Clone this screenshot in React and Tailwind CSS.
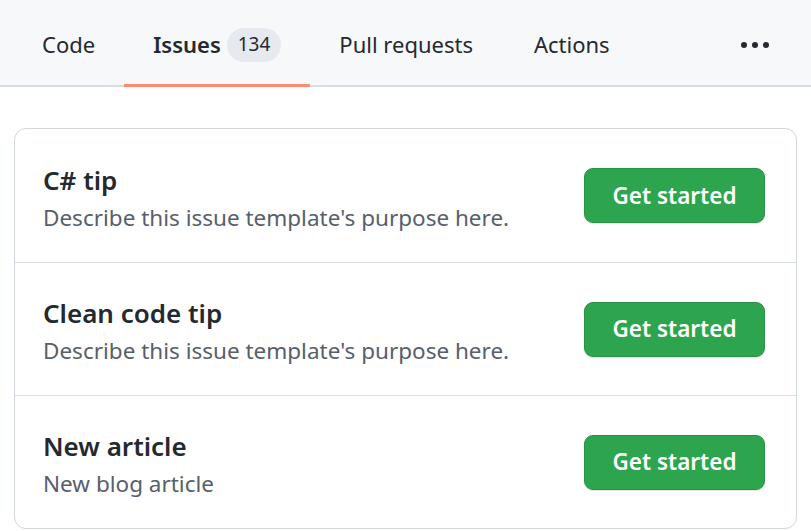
export default function App() {
  const tabs = [
    { label: "Code" },
    { label: "Issues", count: "134", active: true },
    { label: "Pull requests" },
    { label: "Actions" },
  ];
  const rows = [
    { title: "C# tip", desc: "Describe this issue template's purpose here." },
    { title: "Clean code tip", desc: "Describe this issue template's purpose here." },
    { title: "New article", desc: "New blog article" },
  ];
  return (
    <div className="w-[811px] h-[531px] bg-white overflow-hidden" style={{ fontFamily: '"Noto Sans", "Open Sans", sans-serif' }}>
      <div className="h-[87px] bg-[#f6f8fa] border-b-2 border-[#d8dee4] flex items-stretch pl-[13px] pr-[42px]">
        {tabs.map((t) => (
          <div key={t.label} className={`relative flex items-center pt-[4px] px-[29px] text-[22px] text-[#24292f] ${t.active ? "font-semibold" : ""} ${t.label === "Actions" ? "ml-[3px]" : ""}`}>
            <span>{t.label}</span>
            {t.count && (
              <span className="ml-[6px] h-[34px] px-[11px] rounded-full bg-[#e6eaef] text-[19px] font-normal flex items-center">{t.count}</span>
            )}
            {t.active && <span className="absolute left-0 right-0 bottom-[-2px] h-[3px] bg-[#fd8c73]" />}
          </div>
        ))}
        <div className="ml-auto flex items-center gap-[5px] pt-[4px]">
          <span className="w-[6px] h-[6px] rounded-full bg-[#24292f]" />
          <span className="w-[6px] h-[6px] rounded-full bg-[#24292f]" />
          <span className="w-[6px] h-[6px] rounded-full bg-[#24292f]" />
        </div>
      </div>
      <div className="mx-[14px] mt-[41px] border border-[#d0d7de] rounded-[12px]">
        {rows.map((r, i) => (
          <div key={r.title} className={`h-[133px] flex items-center justify-between pl-[28px] pr-[31px] ${i > 0 ? "border-t border-[#d8dee4]" : ""}`}>
            <div className="pt-[6px]">
              <div className="text-[26px] font-semibold text-[#24292f] leading-[37px]">{r.title}</div>
              <div className="text-[22.5px] text-[#57606a] leading-[37px]">{r.desc}</div>
            </div>
            <button className="w-[181px] h-[55px] rounded-[9px] bg-[#2da44e] border border-[#2a9147] text-white text-[22.5px] font-semibold shadow-[0_1px_0_rgba(27,31,36,0.1)]">
              Get started
            </button>
          </div>
        ))}
      </div>
    </div>
  );
}
